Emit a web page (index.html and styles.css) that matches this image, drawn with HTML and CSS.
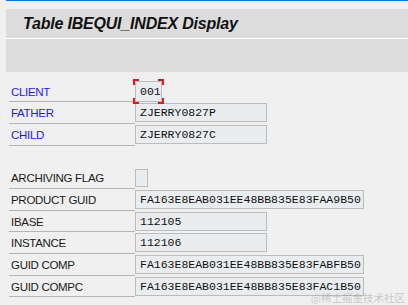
FILE: index.html
```html
<!DOCTYPE html>
<html lang="en">
<head>
    <meta charset="UTF-8">
    <meta name="viewport" content="width=device-width, initial-scale=1.0">
    <title>Table IBEQUI_INDEX Display</title>
    <link rel="stylesheet" href="styles.css">
</head>
<body>
    <div class="top-line"></div>

    <div class="title-bar">
        <h1>Table IBEQUI_INDEX Display</h1>
    </div>
    <div class="toolbar"></div>

    <div class="form">
        <div class="row">
            <span class="label key">CLIENT</span>
            <div class="field short focus">001
                <i class="corner tl"></i><i class="corner tr"></i>
                <i class="corner bl"></i><i class="corner br"></i>
            </div>
        </div>
        <div class="row">
            <span class="label key">FATHER</span>
            <div class="field medium">ZJERRY0827P</div>
        </div>
        <div class="row">
            <span class="label key">CHILD</span>
            <div class="field medium">ZJERRY0827C</div>
        </div>

        <div class="row blank"></div>

        <div class="row">
            <span class="label">ARCHIVING FLAG</span>
            <div class="checkbox"></div>
        </div>
        <div class="row">
            <span class="label">PRODUCT GUID</span>
            <div class="field long">FA163E8EAB031EE48BB835E83FAA9B50</div>
        </div>
        <div class="row">
            <span class="label">IBASE</span>
            <div class="field medium">112105</div>
        </div>
        <div class="row">
            <span class="label">INSTANCE</span>
            <div class="field medium">112106</div>
        </div>
        <div class="row">
            <span class="label">GUID COMP</span>
            <div class="field long">FA163E8EAB031EE48BB835E83FABFB50</div>
        </div>
        <div class="row">
            <span class="label">GUID COMPC</span>
            <div class="field long">FA163E8EAB031EE48BB835E83FAC1B50</div>
        </div>
    </div>

    <div class="watermark">@稀土掘金技术社区</div>
</body>
</html>
```

FILE: styles.css
```css
body {
    font-family: "Liberation Sans", Arial, sans-serif;
    margin: 0;
    padding: 0;
    background-color: #f0f0f0;
    height: 305px;
    overflow: hidden;
    position: relative;
}

.top-line {
    margin-left: 6px;
    height: 1px;
    background-color: #0a78d2;
}

.title-bar {
    margin: 8px 0 0 6px;
    height: 29px;
    background-color: #dcdcdc;
    border-bottom: 1px solid #ffffff;
}

.title-bar h1 {
    margin: 0;
    padding: 6px 0 0 17px;
    font-size: 16px;
    font-weight: bold;
    font-style: italic;
    letter-spacing: -0.2px;
    color: #111111;
}

.toolbar {
    margin-left: 6px;
    height: 33px;
    background-color: #dcdcdc;
}

.form {
    margin-top: 8.5px;
    padding-left: 9px;
}

.row {
    display: flex;
    align-items: center;
    height: 21.7px;
}

.label {
    box-sizing: border-box;
    width: 126px;
    height: 100%;
    line-height: 23px;
    padding-left: 2px;
    border-bottom: 1px solid #b4b4b4;
    font-size: 11.5px;
    letter-spacing: -0.3px;
    color: #1a1a1a;
}

.key {
    color: #1a1aff;
}

.field {
    box-sizing: border-box;
    height: 19px;
    margin-top: 1px;
    align-self: flex-start;
    padding-left: 4px;
    background-color: #e9edf0;
    border: 1px solid #bcbcbc;
    font-family: "Liberation Mono", "Courier New", monospace;
    font-size: 11.5px;
    line-height: 18px;
    color: #111111;
    white-space: nowrap;
}

.short { width: 27px; height: 21px; margin-top: 0; line-height: 20px; position: relative; }
.medium { width: 132px; }
.long { width: 229px; }

.checkbox {
    box-sizing: border-box;
    width: 13px;
    height: 18px;
    align-self: flex-start;
    margin-top: 2px;
    background-color: #e9edf0;
    border: 1px solid #bcbcbc;
}

.corner {
    position: absolute;
    width: 4px;
    height: 4px;
    border: 0 solid #e8141c;
}

.tl { top: -3px; left: -3px; border-top-width: 2px; border-left-width: 2px; }
.tr { top: -3px; right: -3px; border-top-width: 2px; border-right-width: 2px; }
.bl { bottom: -3px; left: -3px; border-bottom-width: 2px; border-left-width: 2px; }
.br { bottom: -3px; right: -3px; border-bottom-width: 2px; border-right-width: 2px; }

.watermark {
    position: absolute;
    right: 3px;
    bottom: 0;
    line-height: 14px;
    font-family: "Noto Sans CJK SC", sans-serif;
    font-size: 10.5px;
    color: rgba(150, 150, 150, 0.45);
}
```
